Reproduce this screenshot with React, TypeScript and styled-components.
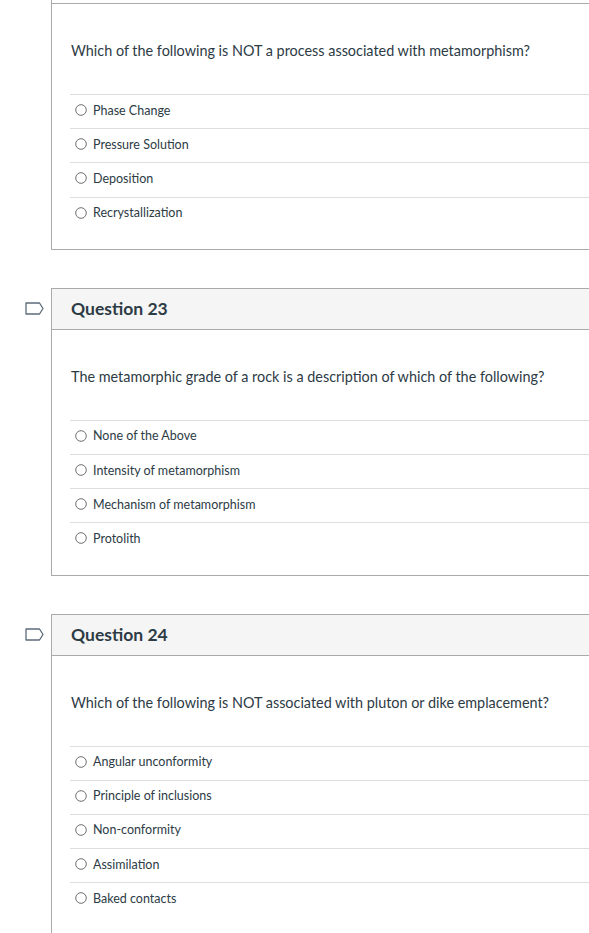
import styled, { createGlobalStyle } from 'styled-components'

//////////////////////////////////////////////////////////////////////

const GlobalStyle = createGlobalStyle`
    html, body {
        margin: 0;
        padding: 0;
        background: #fff;
        overflow: hidden;
    }
    body {
        font-family: Lato, "Noto Sans", "Liberation Sans", sans-serif;
        color: #2d3b45;
    }
`

const Page = styled.div`
    display: flex;
    flex-direction: column;
    gap: 38px;
`

const Row = styled.div`
    display: flex;
    align-items: flex-start;
`

const FlagCol = styled.div`
    width: 51px;
    height: 41px;
    padding-left: 25px;
    box-sizing: border-box;

    display: flex;
    align-items: center;
`

const Panel = styled.div<{ $continued?: boolean }>`
    flex: 1;
    border: 1px solid #aaa;
    border-right: none;
    ${({ $continued }) => $continued && 'border-top: none;'}
`

const Header = styled.div`
    height: 39px;
    padding: 0 0 1px 19px;

    display: flex;
    align-items: center;

    background: #f5f5f5;
    border-bottom: 1px solid #aaa;

    font-size: 17.5px;
    font-weight: 700;
`

// the last pixels of a header scrolled above the top of the page
const HeaderTail = styled.div`
    height: 3px;
    background: #fff;
    border-bottom: 1px solid #aaa;
`

const Body = styled.div`
    padding: 37px 0 18px 18px;
`

const Prompt = styled.p`
    margin: 0 0 33px 1px;
    font-size: 14.4px;
    line-height: 20px;
`

const Answers = styled.ul`
    margin: 0;
    padding: 0;
    list-style: none;
`

const Answer = styled.li`
    height: 34.2px;
    box-sizing: border-box;
    padding: 0 0 3px 5px;

    display: flex;
    align-items: center;
    gap: 6px;

    border-top: 1px solid #ddd;

    font-size: 12.5px;
`

const Radio = () => (
    <svg width="12" height="12" viewBox="0 0 12 12" style={{ flexShrink: 0 }}>
        <circle cx="6" cy="6" r="5.3" fill="#fff" stroke="#707070" strokeWidth="1" />
    </svg>
)

const Flag = () => (
    <svg width="19" height="13" viewBox="0 0 19 13" fill="none">
        <path d="M1 1 H14.5 L18 6.5 L14.5 12 H1 Z" stroke="#5b6b7a" strokeWidth="1.3" strokeLinejoin="round" />
    </svg>
)

//////////////////////////////////////////////////////////////////////

const questions = [
    {
        number: 22,
        continued: true,
        prompt: 'Which of the following is NOT a process associated with metamorphism?',
        answers: ['Phase Change', 'Pressure Solution', 'Deposition', 'Recrystallization'],
    },
    {
        number: 23,
        continued: false,
        prompt: 'The metamorphic grade of a rock is a description of which of the following?',
        answers: ['None of the Above', 'Intensity of metamorphism', 'Mechanism of metamorphism', 'Protolith'],
    },
    {
        number: 24,
        continued: false,
        prompt: 'Which of the following is NOT associated with pluton or dike emplacement?',
        answers: ['Angular unconformity', 'Principle of inclusions', 'Non-conformity', 'Assimilation', 'Baked contacts'],
    },
]

function App() {
    return (
        <>
            <GlobalStyle />
            <Page>
                {questions.map(q =>
                    <Row key={q.number}>
                        <FlagCol>{!q.continued && <Flag />}</FlagCol>
                        <Panel $continued={q.continued}>
                            {q.continued
                                ? <HeaderTail />
                                : <Header>Question {q.number}</Header>}
                            <Body>
                                <Prompt>{q.prompt}</Prompt>
                                <Answers>
                                    {q.answers.map(a =>
                                        <Answer key={a}><Radio />{a}</Answer>
                                    )}
                                </Answers>
                            </Body>
                        </Panel>
                    </Row>
                )}
            </Page>
        </>
    )
}

export default App
